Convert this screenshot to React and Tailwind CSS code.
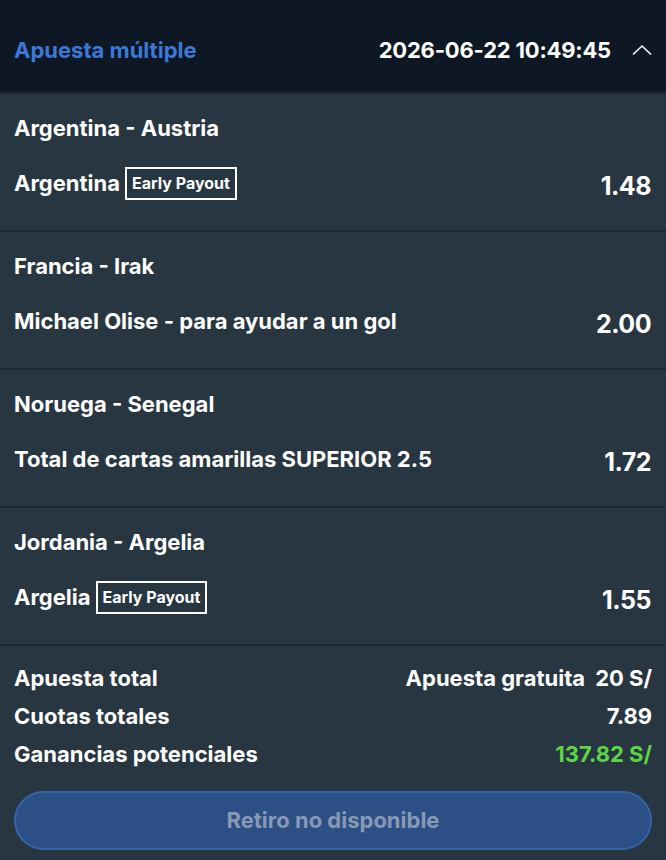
import React from "react";

const font = { fontFamily: "Inter, 'Noto Sans', sans-serif" };

function Badge() {
  return (
    <span className="ml-[5px] inline-flex h-[33px] items-center border-2 border-white px-[5px] text-[16px] font-bold text-white">
      Early Payout
    </span>
  );
}

function Leg({ match, pick, odds, badge }) {
  return (
    <div className="flex h-[136px] shrink-0 flex-col bg-[#273640] px-[14px] pt-[20px]">
      <div className="h-[28px] text-[22px] font-bold leading-[28px] text-white">{match}</div>
      <div className="mt-[23px] flex h-[36px] items-center justify-between">
        <div className="flex items-center text-[22px] font-bold text-white">
          <span>{pick}</span>
          {badge && <Badge />}
        </div>
        <div className="mt-[7px] pr-[1px] text-[25px] font-bold tracking-[-0.5px] text-white">{odds}</div>
      </div>
    </div>
  );
}

export default function App() {
  const legs = [
    { match: "Argentina - Austria", pick: "Argentina", odds: "1.48", badge: true },
    { match: "Francia - Irak", pick: "Michael Olise - para ayudar a un gol", odds: "2.00" },
    { match: "Noruega - Senegal", pick: "Total de cartas amarillas SUPERIOR 2.5", odds: "1.72" },
    { match: "Jordania - Argelia", pick: "Argelia", odds: "1.55", badge: true },
  ];
  const row = "flex items-center justify-between text-[22px] font-bold text-white";
  return (
    <div style={font} className="flex h-[860px] w-[666px] flex-col overflow-hidden bg-[#1c2730]">
      <div className="flex h-[92px] shrink-0 items-center justify-between bg-[#0d1824] pl-[14px] pr-[13px] pt-[8px]">
        <span className="text-[22px] font-bold text-[#3b78d8]">Apuesta múltiple</span>
        <div className="flex items-center">
          <span className="text-[22px] font-bold tracking-[-0.2px] text-white">2026-06-22 10:49:45</span>
          <svg className="ml-[20px]" width="22" height="14" viewBox="0 0 22 14" fill="none">
            <path d="M2 11.5 L11 3 L20 11.5" stroke="white" strokeWidth="1.6" />
          </svg>
        </div>
      </div>
      <div className="flex flex-1 flex-col gap-[2px] pt-[2px]">
        {legs.map((l, i) => (
          <Leg key={i} {...l} />
        ))}
        <div className="flex flex-1 flex-col bg-[#273640] px-[14px] pt-[13px] pb-[10px]">
          <div className={`${row} h-[38px]`}>
            <span>Apuesta total</span>
            <span className="flex gap-[10px]"><span>Apuesta gratuita</span><span>20 S/</span></span>
          </div>
          <div className={`${row} h-[38px]`}>
            <span>Cuotas totales</span>
            <span>7.89</span>
          </div>
          <div className={`${row} h-[39px]`}>
            <span>Ganancias potenciales</span>
            <span className="text-[#5ed545]">137.82 S/</span>
          </div>
          <button className="mt-[17px] flex h-[59px] w-full shrink-0 items-center justify-center rounded-full border-2 border-[#3464aa] bg-[#2c4f85] text-[22px] font-bold text-[#8899b5]">
            Retiro no disponible
          </button>
        </div>
      </div>
    </div>
  );
}
